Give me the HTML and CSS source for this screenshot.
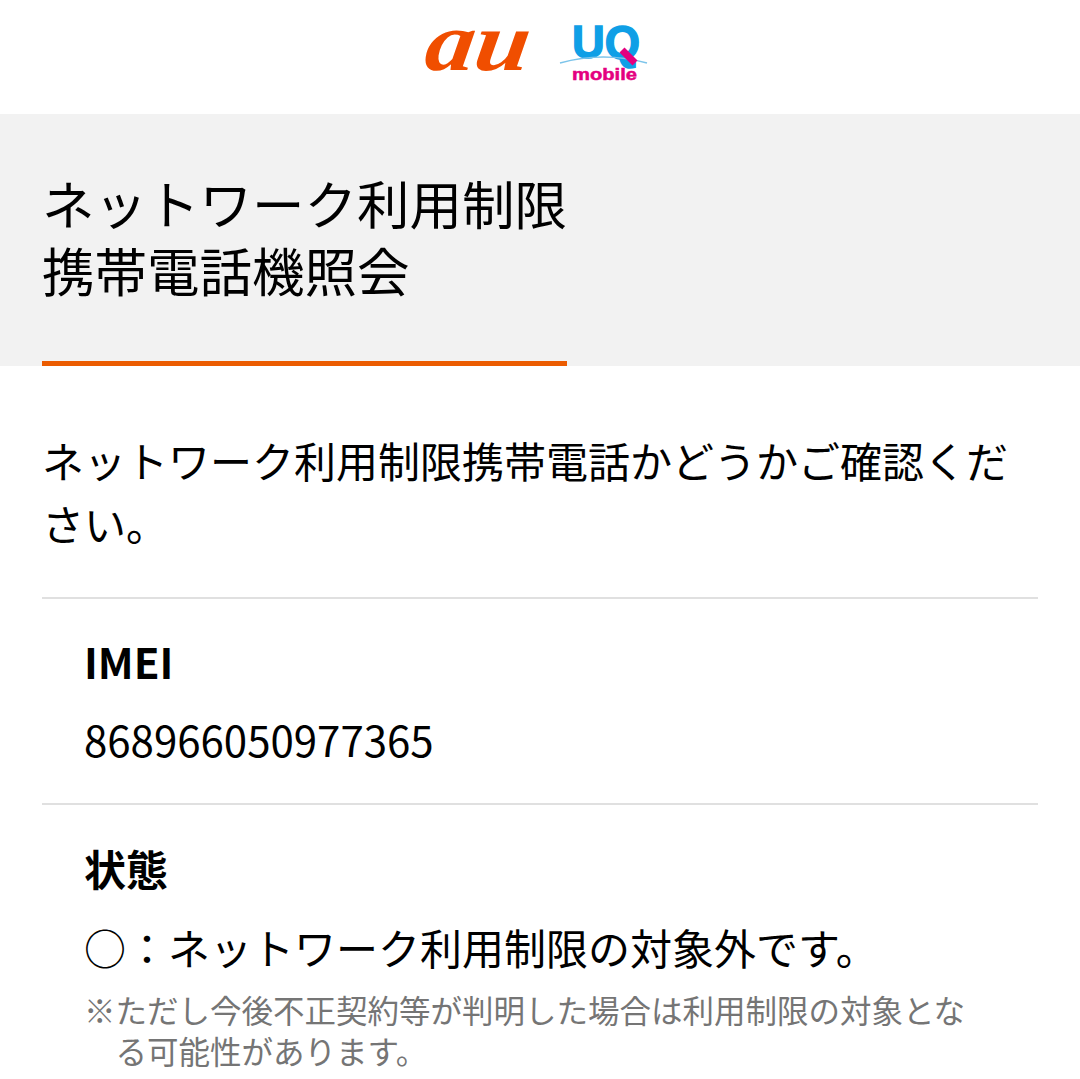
FILE: index.html
```html
<!DOCTYPE html>
<html lang="ja">
  <head>
    <meta charset="UTF-8" />
    <meta name="viewport" content="width=device-width, initial-scale=1.0" />
    <title>ネットワーク利用制限携帯電話機照会</title>
    <link rel="stylesheet" href="styles.css">
  </head>
  <body>
    <header class="logos">
      <svg class="logo-au" width="110" height="90" viewBox="0 0 110 90" role="img" aria-label="au">
        <text transform="skewX(-8)" x="6" y="58" textLength="104" lengthAdjust="spacingAndGlyphs">au</text>
      </svg>
      <svg class="logo-uq" width="96" height="70" viewBox="0 0 96 70" role="img" aria-label="UQ mobile">
        <text class="uq-letters" x="13" y="36" textLength="68" lengthAdjust="spacingAndGlyphs">UQ</text>
        <path class="uq-arc" d="M1 41 Q44 29 88 41" />
        <path class="uq-tail" d="M63 28 L76 41" />
        <text class="uq-mobile" x="13" y="58" textLength="65" lengthAdjust="spacingAndGlyphs">mobile</text>
      </svg>
    </header>

    <section class="title-band">
      <h1 class="page-title">ネットワーク利用制限<br />携帯電話機照会</h1>
    </section>

    <main class="content">
      <p class="intro">ネットワーク利用制限携帯電話かどうかご確認ください。</p>
      <dl class="info">
        <div class="info-row">
          <dt>IMEI</dt>
          <dd class="imei">868966050977365</dd>
        </div>
        <div class="info-row">
          <dt>状態</dt>
          <dd class="status">○：ネットワーク利用制限の対象外です。</dd>
          <dd class="note">※ただし今後不正契約等が判明した場合は利用制限の対象となる可能性があります。</dd>
        </div>
      </dl>
    </main>
  </body>
</html>
```

FILE: styles.css
```css
html,
body {
  margin: 0;
  padding: 0;
  height: 1079px;
  overflow: hidden;
}
body {
  background: #fff;
  color: #000;
  font-family: "Noto Sans CJK JP", "Noto Sans", sans-serif;
}
.logos {
  display: flex;
  justify-content: center;
  align-items: center;
  gap: 24px;
  height: 114px;
}
.logos svg {
  overflow: visible;
}
.logo-au text {
  font-family: "Liberation Serif", serif;
  font-style: italic;
  font-weight: bold;
  font-size: 84px;
  fill: #f04e00;
}
.uq-letters {
  font-family: "Liberation Sans", sans-serif;
  font-weight: bold;
  font-size: 47px;
  fill: #0f9fe6;
  stroke: #0f9fe6;
  stroke-width: 1.5;
}
.uq-arc {
  fill: none;
  stroke: #7cc4ea;
  stroke-width: 1.5;
}
.uq-tail {
  stroke: #e4007f;
  stroke-width: 7;
}
.uq-mobile {
  font-family: "Liberation Sans", sans-serif;
  font-weight: bold;
  font-size: 17px;
  fill: #e4007f;
  stroke: #e4007f;
  stroke-width: 0.5;
}
.title-band {
  background: #f2f2f2;
  padding: 55px 42px 0;
  height: 252px;
  box-sizing: border-box;
}
.page-title {
  display: inline-block;
  margin: 0;
  height: 197px;
  box-sizing: border-box;
  border-bottom: 5px solid #eb5c01;
  font-size: 52.5px;
  font-weight: 400;
  line-height: 67px;
}
.content {
  padding: 62px 42px 0;
}
.intro {
  margin: 0;
  font-size: 42px;
  line-height: 63px;
  padding-bottom: 43px;
  border-bottom: 2px solid #e0e0e0;
}
.info {
  margin: 0;
}
.info-row {
  padding: 30px 42px 33px;
  border-bottom: 2px solid #e0e0e0;
}
.info-row:last-child {
  padding-top: 31px;
  border-bottom: 0;
}
.info dt {
  font-size: 42px;
  font-weight: 700;
  line-height: 63px;
}
.info dd {
  margin: 0;
  font-size: 42px;
  line-height: 63px;
}
.info .imei {
  margin-top: 15px;
}
.info .status {
  margin-top: 16px;
}
.info .note {
  margin-top: 11px;
  padding-left: 31.5px;
  text-indent: -31.5px;
  font-size: 31.5px;
  line-height: 41px;
  color: #757575;
}
```
